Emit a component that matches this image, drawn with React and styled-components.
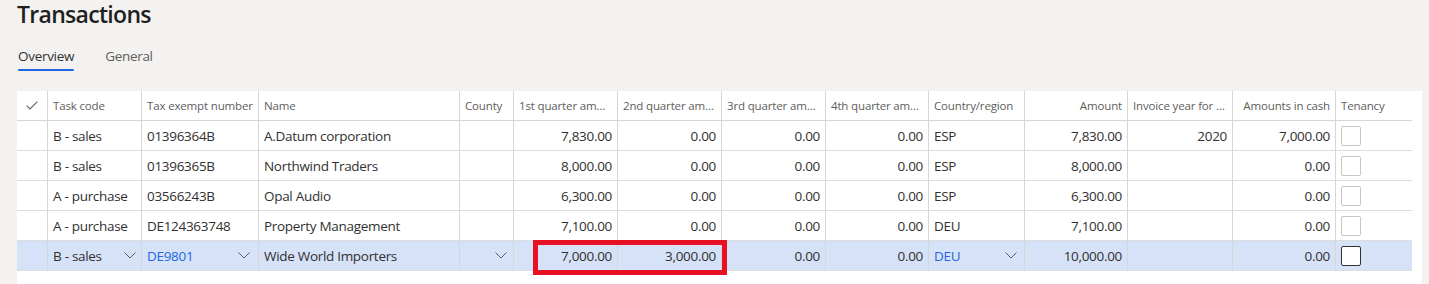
import React from "react";
import styled, { createGlobalStyle } from "styled-components";

const GlobalStyle = createGlobalStyle`
  body {
    margin: 0;
    background: #f3f2f1;
    font-family: "Open Sans", "Noto Sans", sans-serif;
    color: #323130;
  }
`;

const Page = styled.div`
  padding: 0 7px 0 17px;
  height: 284px;
  overflow: hidden;
`;

const Title = styled.h1`
  margin: -2px 0 0;
  font-size: 23px;
  letter-spacing: -0.7px;
  line-height: 32px;
  font-weight: 600;
  color: #201f1e;
`;

const Tabs = styled.div`
  display: flex;
  gap: 31px;
  margin-top: 16px;
  padding-left: 1px;
`;

const Tab = styled.div`
  position: relative;
  font-size: 13.5px;
  letter-spacing: -0.3px;
  line-height: 20px;
  padding-bottom: 5px;
  color: ${(p) => (p.$active ? "#323130" : "#605e5c")};
  &::after {
    content: "";
    position: absolute;
    left: 0;
    right: 0;
    bottom: 0;
    height: 2px;
    border-radius: 1px;
    background: ${(p) => (p.$active ? "#2266e3" : "transparent")};
  }
`;

const Panel = styled.div`
  position: relative;
  margin-top: 20px;
  background: #fff;
  height: 220px;
`;

const Grid = styled.table`
  border-collapse: separate;
  border-spacing: 0;
  table-layout: fixed;
  width: 1395px;
`;

const HeadCell = styled.th`
  box-sizing: border-box;
  height: 30px;
  padding: 0 5px;
  font-size: 11.5px;
  letter-spacing: -0.15px;
  font-weight: 400;
  color: #605e5c;
  text-align: ${(p) => (p.$right ? "right" : "left")};
  white-space: nowrap;
  overflow: hidden;
  text-overflow: ellipsis;
  border-bottom: 1px solid #d6d6d6;
  border-left: ${(p) => (p.$first ? "none" : "1px solid #d6d6d6")};
`;

const Row = styled.tr`
  background: ${(p) => (p.$selected ? "#d6e2f8" : "#fff")};
`;

const Cell = styled.td`
  box-sizing: border-box;
  height: 30px;
  padding: 0 5px;
  font-size: 13.5px;
  letter-spacing: -0.3px;
  color: ${(p) => (p.$link ? "#2266e3" : "#323130")};
  text-align: ${(p) => (p.$right ? "right" : "left")};
  white-space: nowrap;
  overflow: hidden;
  border-bottom: 1px solid #dcdcdc;
  border-left: ${(p) => (p.$first ? "none" : "1px solid #d6d6d6")};
`;

const Lookup = styled.div`
  display: flex;
  align-items: center;
  justify-content: space-between;
  padding-right: ${(p) => p.$pad || 0}px;
`;

const Check = styled.div`
  width: 20px;
  height: 20px;
  box-sizing: border-box;
  border: 1px solid ${(p) => (p.$dark ? "#323130" : "#c8c6c4")};
  border-radius: 2px;
  background: #fff;
`;

const Highlight = styled.div`
  position: absolute;
  left: 516px;
  top: 149px;
  width: 194px;
  height: 35px;
  box-sizing: border-box;
  border: 5px solid #e81123;
  pointer-events: none;
`;

const Chevron = () => (
  <svg width="12" height="7" viewBox="0 0 12 7">
    <path d="M0.5 0.5 L6 6 L11.5 0.5" fill="none" stroke="#605e5c" strokeWidth="1" />
  </svg>
);

const CheckMark = () => (
  <svg width="12" height="9" viewBox="0 0 12 9" style={{ display: "block", margin: "0 auto" }}>
    <path d="M0.7 4.6 L4 7.9 L11.3 0.6" fill="none" stroke="#605e5c" strokeWidth="1.1" />
  </svg>
);

const columns = [
  { label: "", width: 30 },
  { label: "Task code", width: 94 },
  { label: "Tax exempt number", width: 117 },
  { label: "Name", width: 201 },
  { label: "County", width: 54 },
  { label: "1st quarter amount", width: 104 },
  { label: "2nd quarter amount", width: 104 },
  { label: "3rd quarter amount", width: 104 },
  { label: "4th quarter amount", width: 103 },
  { label: "Country/region", width: 96 },
  { label: "Amount", width: 103, right: true },
  { label: "Invoice year for reporting", width: 105 },
  { label: "Amounts in cash", width: 103, right: true },
  { label: "Tenancy", width: 77 },
];

const rows = [
  { task: "B - sales", tax: "01396364B", name: "A.Datum corporation", q: ["7,830.00", "0.00", "0.00", "0.00"], country: "ESP", amount: "7,830.00", year: "2020", cash: "7,000.00" },
  { task: "B - sales", tax: "01396365B", name: "Northwind Traders", q: ["8,000.00", "0.00", "0.00", "0.00"], country: "ESP", amount: "8,000.00", year: "", cash: "0.00" },
  { task: "A - purchase", tax: "03566243B", name: "Opal Audio", q: ["6,300.00", "0.00", "0.00", "0.00"], country: "ESP", amount: "6,300.00", year: "", cash: "0.00" },
  { task: "A - purchase", tax: "DE124363748", name: "Property Management", q: ["7,100.00", "0.00", "0.00", "0.00"], country: "DEU", amount: "7,100.00", year: "", cash: "0.00" },
  { task: "B - sales", tax: "DE9801", name: "Wide World Importers", q: ["7,000.00", "3,000.00", "0.00", "0.00"], country: "DEU", amount: "10,000.00", year: "", cash: "0.00", selected: true },
];

export default function App() {
  return (
    <>
      <GlobalStyle />
      <Page>
        <Title>Transactions</Title>
        <Tabs>
          <Tab $active>Overview</Tab>
          <Tab>General</Tab>
        </Tabs>
        <Panel>
          <Grid>
            <colgroup>
              {columns.map((c, i) => (
                <col key={i} style={{ width: c.width }} />
              ))}
            </colgroup>
            <thead>
              <tr>
                {columns.map((c, i) => (
                  <HeadCell key={i} $first={i === 0} $right={c.right}>
                    {i === 0 ? <CheckMark /> : c.label}
                  </HeadCell>
                ))}
              </tr>
            </thead>
            <tbody>
              {rows.map((r, i) => (
                <Row key={i} $selected={r.selected}>
                  <Cell $first />
                  <Cell>
                    {r.selected ? (
                      <Lookup $pad={0}>{r.task}<Chevron /></Lookup>
                    ) : (
                      r.task
                    )}
                  </Cell>
                  <Cell $link={r.selected}>
                    {r.selected ? (
                      <Lookup $pad={3}>{r.tax}<Chevron /></Lookup>
                    ) : (
                      r.tax
                    )}
                  </Cell>
                  <Cell>{r.name}</Cell>
                  <Cell>
                    {r.selected && (
                      <Lookup $pad={1}><span /><Chevron /></Lookup>
                    )}
                  </Cell>
                  {r.q.map((v, j) => (
                    <Cell key={j} $right>{v}</Cell>
                  ))}
                  <Cell $link={r.selected}>
                    {r.selected ? (
                      <Lookup $pad={2}>{r.country}<Chevron /></Lookup>
                    ) : (
                      r.country
                    )}
                  </Cell>
                  <Cell $right>{r.amount}</Cell>
                  <Cell $right>{r.year}</Cell>
                  <Cell $right>{r.cash}</Cell>
                  <Cell>
                    <Check $dark={r.selected} />
                  </Cell>
                </Row>
              ))}
            </tbody>
          </Grid>
          <Highlight />
        </Panel>
      </Page>
    </>
  );
}
